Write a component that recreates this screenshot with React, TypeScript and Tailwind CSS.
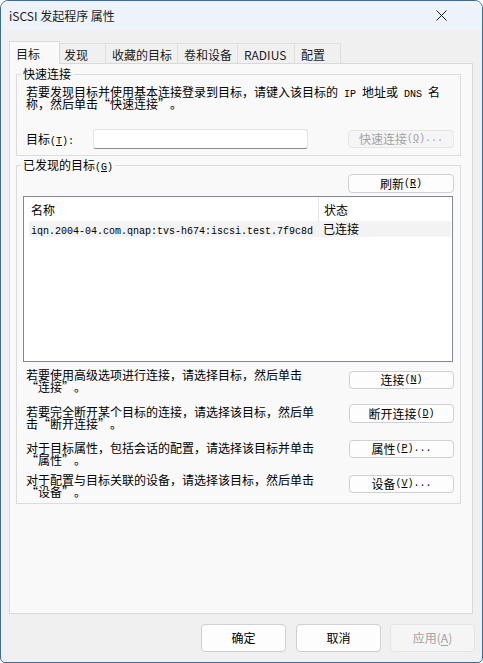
import React from "react";

function M({ children }: { children: React.ReactNode }) {
  return <span className="font-['Liberation_Mono',monospace] text-[10px] leading-[0px]">{children}</span>;
}

function Acc({ k, tail = "" }: { k: string; tail?: string }) {
  return (
    <M>
      (<span className="underline underline-offset-[1px]">{k}</span>){tail}
    </M>
  );
}

// Render curly quotes as full-width cells like SimSun does
function Q({ s }: { s: string }) {
  const parts = s.split(/([“”])/);
  return (
    <>
      {parts.map((p, i) =>
        p === "“" ? (
          <span key={i} className="inline-block w-[12px] text-right">“</span>
        ) : p === "”" ? (
          <span key={i} className="inline-block w-[12px] text-left">”</span>
        ) : (
          <React.Fragment key={i}>{p}</React.Fragment>
        )
      )}
    </>
  );
}

function Btn({
  children,
  disabled = false,
  className = "",
}: {
  children: React.ReactNode;
  disabled?: boolean;
  className?: string;
}) {
  return (
    <div
      className={
        "flex items-center justify-center rounded-[4px] border leading-[12px] " +
        (disabled
          ? "bg-[#f5f5f5] border-[#e5e5e5] text-[#a3a3a3] "
          : "bg-[#fdfdfd] border-[#d0d0d0] text-black ") +
        className
      }
    >
      {children}
    </div>
  );
}

function Row({
  l1,
  l2,
  btn,
  rowMt,
  textMt,
  btnMt,
  btnH,
}: {
  l1: string;
  l2: string;
  btn: React.ReactNode;
  rowMt: string;
  textMt: string;
  btnMt: string;
  btnH: string;
}) {
  return (
    <div className={"flex justify-between pl-[9px] pr-[6px] " + rowMt}>
      <div className={"whitespace-nowrap " + textMt}>
        <div className="h-[12px] leading-[12px]">{l1}</div>
        <div className="h-[12px] leading-[12px]">
          <Q s={l2} />
        </div>
      </div>
      <Btn className={"w-[105px] " + btnH + " " + btnMt}>{btn}</Btn>
    </div>
  );
}

export default function App() {
  return (
    <div
      lang="zh-CN"
      className="w-[483px] h-[663px] bg-white font-['Noto_Sans_CJK_SC',sans-serif] text-[12px] leading-[12px] text-black"
    >
      <div className="w-[483px] h-[663px] border border-[#3b6d96] rounded-t-[8px] rounded-b-[5px] overflow-hidden bg-[#f0f0f0] flex flex-col">
        {/* Title bar */}
        <div className="h-[29px] shrink-0 bg-[#eef3fa] flex items-center justify-between pl-[8px] pr-[35px]">
          <span className="text-[#1b1b1b] text-[12px]">iSCSI 发起程序 属性</span>
          <svg width="11" height="11" viewBox="0 0 11 11" className="text-[#1b1b1b]">
            <path d="M0.5 0.5 L10.5 10.5 M10.5 0.5 L0.5 10.5" stroke="currentColor" strokeWidth="1" fill="none" />
          </svg>
        </div>

        {/* Body */}
        <div className="pl-[8px] pt-[11px]">
          {/* Tabs */}
          <div className="flex items-end h-[22px] text-[#1a1a1a]">
            <div className="relative z-10 -mb-px h-[23px] w-[51px] border border-b-0 border-[#d9d9d9] bg-[#f9f9f9] pl-[6px] pt-px flex items-center">
              目标
            </div>
            <div className="h-[20px] w-[46px] border-t border-r border-[#dedede] pl-[4px] pt-[2px] flex items-center">
              发现
            </div>
            <div className="h-[20px] w-[72px] border-t border-r border-[#dedede] pl-[6px] pt-[2px] flex items-center">
              收藏的目标
            </div>
            <div className="h-[20px] w-[60px] border-t border-r border-[#dedede] pl-[6px] pt-[2px] flex items-center">
              卷和设备
            </div>
            <div className="h-[20px] w-[57px] border-t border-r border-[#dedede] pl-[6px] pt-[2px] flex items-center">
              RADIUS
            </div>
            <div className="h-[20px] w-[46px] border-t border-r border-[#dedede] pl-[6px] pt-[2px] flex items-center">
              配置
            </div>
          </div>

          {/* Panel */}
          <div className="w-[464px] h-[551px] border border-[#d9d9d9] bg-[#f9f9f9] pl-[6px] pt-[4px]">
            {/* Quick connect group */}
            <fieldset className="w-[445px] border border-[#dcdcdc]">
              <legend className="ml-[4px] px-[2px] h-[12px] leading-[12px]">快速连接</legend>
              <div className="mt-[6px] pl-[9px] whitespace-nowrap">
                <div className="h-[12px] leading-[12px]">
                  若要发现目标并使用基本连接登录到目标，请键入该目标的<M> IP </M>地址或<M> DNS </M>名
                </div>
                <div className="h-[12px] leading-[12px]">
                  <Q s="称，然后单击“快速连接”。" />
                </div>
              </div>
              <div className="mt-[19px] mb-[6px] ml-[9px] flex items-center h-[20px]">
                <div className="w-[67px] h-[12px] leading-[12px]">
                  目标
                  <M>
                    (<span className="underline underline-offset-[1px]">T</span>):
                  </M>
                </div>
                <div className="w-[215px] h-[20px] bg-white border border-[#e3e3e3] border-b-[#8a8a8a] rounded-[3px]" />
                <Btn disabled className="ml-[40px] w-[106px] h-[18px]">
                  快速连接<Acc k="Q" tail="..." />
                </Btn>
              </div>
            </fieldset>

            {/* Discovered targets group */}
            <fieldset className="mt-[3px] w-[445px] border border-[#dcdcdc] pb-[5px]">
              <legend className="ml-[4px] px-[2px] h-[12px] leading-[12px]">
                已发现的目标<Acc k="G" />
              </legend>
              <div className="mt-[3px] flex justify-end pr-[6px]">
                <Btn className="w-[106px] h-[19px]">
                  刷新<Acc k="R" />
                </Btn>
              </div>

              {/* List */}
              <div className="mt-[3px] ml-[6px] w-[430px] h-[166px] border border-[#828790] bg-white">
                <div className="h-[24px] flex">
                  <div className="w-[295px] border-r border-[#e5e5e5] pl-[7px] flex items-center pt-[2px]">
                    名称
                  </div>
                  <div className="pl-[5px] flex items-center pt-[2px]">状态</div>
                </div>
                <div className="ml-[5px] mr-px h-[16px] bg-[#f3f3f3] flex items-center">
                  <div className="w-[294px] pl-[2px]">
                    <M>iqn.2004-04.com.qnap:tvs-h674:iscsi.test.7f9c8d</M>
                  </div>
                  <div>已连接</div>
                </div>
              </div>

              {/* Action rows */}
              <Row
                l1="若要使用高级选项进行连接，请选择目标，然后单击"
                l2="“连接”。"
                btn={<>连接<Acc k="N" /></>}
                rowMt="mt-[7px]"
                textMt="mt-0"
                btnMt="mt-[2px]"
                btnH="h-[18px]"
              />
              <Row
                l1="若要完全断开某个目标的连接，请选择该目标，然后单"
                l2="击“断开连接”。"
                btn={<>断开连接<Acc k="D" /></>}
                rowMt="mt-[11px]"
                textMt="mt-[2px]"
                btnMt="mt-0"
                btnH="h-[19px]"
              />
              <Row
                l1="对于目标属性，包括会话的配置，请选择该目标并单击"
                l2="“属性”。"
                btn={<>属性<Acc k="P" tail="..." /></>}
                rowMt="mt-[10px]"
                textMt="mt-[2px]"
                btnMt="mt-0"
                btnH="h-[18px]"
              />
              <Row
                l1="对于配置与目标关联的设备，请选择该目标，然后单击"
                l2="“设备”。"
                btn={<>设备<Acc k="V" tail="..." /></>}
                rowMt="mt-[8px]"
                textMt="mt-0"
                btnMt="mt-px"
                btnH="h-[18px]"
              />
            </fieldset>
          </div>
        </div>

        {/* Bottom buttons */}
        <div className="mt-[10px] flex justify-end pr-[7px] gap-[10px]">
          <Btn className="w-[85px] h-[28px]">确定</Btn>
          <Btn className="w-[85px] h-[28px]">取消</Btn>
          <Btn disabled className="w-[85px] h-[28px] -ml-px">
            应用(<span className="underline underline-offset-[2px]">A</span>)
          </Btn>
        </div>
      </div>
    </div>
  );
}
